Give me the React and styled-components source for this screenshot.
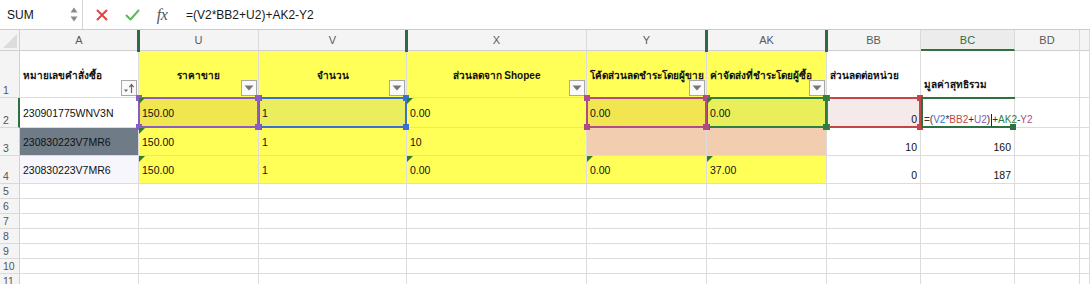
import React from 'react';
import styled, { createGlobalStyle, css } from 'styled-components';

const Global = createGlobalStyle`
  html, body { margin: 0; padding: 0; background: #fff; }
  body {
    font-family: "Liberation Sans", Arial, "Noto Sans", "DejaVu Sans", sans-serif;
    overflow: hidden;
  }
  #root { width: 1090px; height: 284px; }
`;

const YELLOW = '#ffff57';
const PEACH = '#f3cdb0';
const SLATE = '#6f7c88';
const GRID = '#dcdcdc';

const Page = styled.div`
  width: 1090px;
  height: 284px;
  overflow: hidden;
  display: flex;
  flex-direction: column;
  background: #fff;
`;

const FormulaBar = styled.div`
  flex: none;
  height: 29px;
  display: flex;
  align-items: stretch;
  border-bottom: 1px solid #cccccc;
  background: #fff;
`;

const NameBox = styled.div`
  width: 83px;
  box-sizing: border-box;
  display: flex;
  align-items: center;
  justify-content: space-between;
  padding: 0 4px 0 7px;
  border-right: 1px solid #d4d4d4;
  font-size: 12px;
  color: #111;
`;

const Spinner = styled.div`
  display: flex;
  flex-direction: column;
  gap: 3px;
`;

const IconRow = styled.div`
  display: flex;
  align-items: center;
  padding-left: 4px;
`;

const IconBtn = styled.div`
  width: 30px;
  display: flex;
  align-items: center;
  justify-content: center;
`;

const Fx = styled.span`
  font-family: "Liberation Serif", "DejaVu Serif", serif;
  font-style: italic;
  font-size: 16px;
  color: #555;
  letter-spacing: -0.5px;
`;

const FormulaText = styled.div`
  display: flex;
  align-items: center;
  padding-left: 9px;
  font-size: 12px;
  color: #1a1a1a;
`;

const Sheet = styled.div`
  flex: 1;
  display: grid;
  grid-template-columns: 20px 119px 120px 148px 180px 120px 120px 94px 94px 65px 1fr;
  grid-template-rows: 21px 47px 30px 28px 28px repeat(7, 15px);
`;

const Corner = styled.div`
  position: relative;
  background: #f4f4f4;
  border-right: 1px solid #d0d0d0;
  border-bottom: 1px solid #cfcfcf;
  box-sizing: border-box;
  display: flex;
  align-items: flex-end;
  justify-content: flex-end;
  padding: 0 2px 2px 0;
`;

const ColHead = styled.div`
  position: relative;
  box-sizing: border-box;
  background: #f4f4f4;
  border-right: 1px solid #dadada;
  border-bottom: 1px solid #cfcfcf;
  display: flex;
  align-items: center;
  justify-content: center;
  font-size: 11px;
  color: #5a5a5a;
  ${(p) =>
    p.$active &&
    css`
      background: #ececec;
      color: #2c6e3f;
      border-bottom: 2px solid #2e7041;
    `}
  ${(p) =>
    p.$mark &&
    css`
      &::before {
        content: '';
        position: absolute;
        left: -2px;
        top: 0;
        bottom: -2px;
        width: 3px;
        background: #2e6b42;
        z-index: 8;
      }
    `}
`;

const RowHead = styled.div`
  box-sizing: border-box;
  background: #f4f4f4;
  border-right: 1px solid #d0d0d0;
  border-bottom: 1px solid #dadada;
  display: flex;
  align-items: flex-end;
  padding: 0 0 0 3px;
  font-size: 10.5px;
  line-height: 13px;
  color: #555;
  ${(p) =>
    p.$active &&
    css`
      border-right: 2px solid #2e7041;
    `}
`;

const Cell = styled.div`
  position: relative;
  box-sizing: border-box;
  min-width: 0;
  background: ${(p) => p.$bg || '#fff'};
  border-right: 1px solid ${GRID};
  border-bottom: 1px solid ${GRID};
  display: flex;
  align-items: ${(p) => (p.$bottom ? 'flex-end' : 'center')};
  justify-content: ${(p) => (p.$right ? 'flex-end' : 'flex-start')};
  padding: ${(p) => (p.$bottom ? '0 3px 1px 3px' : '0 3px')};
  font-size: 10.5px;
  line-height: 14px;
  color: #111;
  white-space: nowrap;
  ${(p) =>
    p.$tri &&
    css`
      &::before {
        content: '';
        position: absolute;
        top: 0;
        left: 0;
        width: 0;
        height: 0;
        border-top: 6px solid #2f7d2f;
        border-right: 6px solid transparent;
        z-index: 9;
      }
    `}
`;

const HeadCell = styled(Cell)`
  font-weight: bold;
  font-size: 10px;
  justify-content: ${(p) => (p.$center ? 'center' : 'flex-start')};
  align-items: flex-start;
  padding: ${(p) => (p.$low ? '27px 3px 0 3px' : '18px 3px 0 3px')};
`;

const FilterBtn = styled.div`
  position: absolute;
  right: 1px;
  bottom: 1px;
  width: 16px;
  height: 16px;
  box-sizing: border-box;
  border: 1px solid #a9a9a9;
  background: #fafafa;
  display: flex;
  align-items: center;
  justify-content: center;
  z-index: 3;
`;

const Sel = styled.div`
  position: absolute;
  top: -1px;
  left: -1px;
  right: -1px;
  bottom: -1px;
  border: 2px solid ${(p) => p.$c};
  z-index: ${(p) => p.$z};
  pointer-events: none;
`;

const Handle = styled.span`
  position: absolute;
  width: 6px;
  height: 6px;
  background: ${(p) => p.$c};
  ${(p) => (p.$top ? 'top: -4px;' : 'bottom: -4px;')}
  ${(p) => (p.$left ? 'left: -4px;' : 'right: -4px;')}
`;

const EditFrame = styled.div`
  position: absolute;
  top: -1px;
  left: 0;
  right: -1px;
  bottom: -1px;
  border-top: 2px solid #2e7041;
  border-bottom: 2px solid #2e7041;
  border-left: 2px solid #2e7041;
  z-index: 7;
  pointer-events: none;
`;

const EditHandle = styled.span`
  position: absolute;
  right: -1px;
  bottom: -4px;
  width: 6px;
  height: 6px;
  background: #2e7041;
`;

const EditText = styled.span`
  position: relative;
  z-index: 8;
  font-size: 10px;
  line-height: 13px;
  color: #333;
  display: flex;
  align-items: center;
`;

const Ref = styled.span`
  color: ${(p) => p.$c};
`;

const Caret = styled.span`
  display: inline-block;
  width: 0;
  height: 12px;
  border-left: 1px solid #222;
  margin: 0 0.5px;
`;

const C = {
  blue: '#3b6fd1',
  red: '#c44545',
  purple: '#8b5cc4',
  green: '#2f7d40',
  magenta: '#b04b86',
};

function Selection({ c, z }) {
  return (
    <Sel $c={c} $z={z}>
      <Handle $c={c} $top $left />
      <Handle $c={c} $top />
      <Handle $c={c} $left />
      <Handle $c={c} />
    </Sel>
  );
}

function FilterIcon() {
  return (
    <FilterBtn>
      <svg width="10" height="6" viewBox="0 0 10 6">
        <path d="M0.5 0.5 L9.5 0.5 L5 5.5 Z" fill="#777" />
      </svg>
    </FilterBtn>
  );
}

function SortFilterIcon() {
  return (
    <FilterBtn>
      <svg width="12" height="11" viewBox="0 0 12 11">
        <path d="M1 6.5 L5 6.5 L3 9 Z" fill="#666" />
        <path d="M8.5 10 L8.5 2" stroke="#666" strokeWidth="1.2" />
        <path d="M6.3 4.2 L8.5 1.5 L10.7 4.2" stroke="#666" strokeWidth="1.2" fill="none" />
      </svg>
    </FilterBtn>
  );
}

const COLS = [
  { l: 'A' },
  { l: 'U', mark: true },
  { l: 'V' },
  { l: 'X', mark: true },
  { l: 'Y' },
  { l: 'AK', mark: true },
  { l: 'BB', mark: true },
  { l: 'BC', active: true },
  { l: 'BD' },
  { l: '' },
];

const EmptyRow = ({ n }) => (
  <>
    <RowHead>{n}</RowHead>
    {COLS.map((c, i) => (
      <Cell key={i} />
    ))}
  </>
);

export default function App() {
  return (
    <Page>
      <Global />
      <FormulaBar>
        <NameBox>
          <span>SUM</span>
          <Spinner>
            <svg width="8" height="6" viewBox="0 0 8 6">
              <path d="M4 0.5 L7.5 5.5 L0.5 5.5 Z" fill="#8a8a8a" />
            </svg>
            <svg width="8" height="6" viewBox="0 0 8 6">
              <path d="M0.5 0.5 L7.5 0.5 L4 5.5 Z" fill="#8a8a8a" />
            </svg>
          </Spinner>
        </NameBox>
        <IconRow>
          <IconBtn>
            <svg width="12" height="12" viewBox="0 0 12 12">
              <path d="M1.5 1.5 L10.5 10.5 M10.5 1.5 L1.5 10.5" stroke="#e0443e" strokeWidth="2" strokeLinecap="round" />
            </svg>
          </IconBtn>
          <IconBtn>
            <svg width="15" height="12" viewBox="0 0 15 12">
              <path d="M1.5 6.5 L5.5 10.5 L13.5 1.5" stroke="#5cb85c" strokeWidth="2" fill="none" strokeLinecap="round" strokeLinejoin="round" />
            </svg>
          </IconBtn>
          <IconBtn>
            <Fx>fx</Fx>
          </IconBtn>
        </IconRow>
        <FormulaText>=(V2*BB2+U2)+AK2-Y2</FormulaText>
      </FormulaBar>

      <Sheet>
        <Corner>
          <svg width="14" height="14" viewBox="0 0 14 14">
            <path d="M14 0 L14 14 L0 14 Z" fill="#dcdcdc" />
          </svg>
        </Corner>
        {COLS.map((c, i) => (
          <ColHead key={i} $mark={c.mark} $active={c.active}>
            {c.l}
          </ColHead>
        ))}

        <RowHead>1</RowHead>
        <HeadCell>
          หมายเลขคำสั่งซื้อ
          <SortFilterIcon />
        </HeadCell>
        <HeadCell $bg={YELLOW} $center>
          ราคาขาย
          <FilterIcon />
        </HeadCell>
        <HeadCell $bg={YELLOW} $center>
          จำนวน
          <FilterIcon />
        </HeadCell>
        <HeadCell $bg={YELLOW} $center>
          ส่วนลดจาก Shopee
          <FilterIcon />
        </HeadCell>
        <HeadCell $bg={YELLOW} $center>
          โค้ดส่วนลดชำระโดยผู้ขาย
          <FilterIcon />
        </HeadCell>
        <HeadCell $bg={YELLOW}>
          ค่าจัดส่งที่ชำระโดยผู้ซื้อ
          <FilterIcon />
        </HeadCell>
        <HeadCell>ส่วนลดต่อหน่วย</HeadCell>
        <HeadCell $low>มูลค่าสุทธิรวม</HeadCell>
        <HeadCell />
        <HeadCell />

        <RowHead $active>2</RowHead>
        <Cell>230901775WNV3N</Cell>
        <Cell $bg="#efe650" $tri>
          150.00
          <Selection c={C.purple} z={6} />
        </Cell>
        <Cell $bg="#eaee5e">
          1
          <Selection c={C.blue} z={5} />
        </Cell>
        <Cell $bg={YELLOW} $tri>
          0.00
        </Cell>
        <Cell $bg="#f1e651">
          0.00
          <Selection c={C.magenta} z={4} />
        </Cell>
        <Cell $bg="#e9ee5b" $tri>
          0.00
          <Selection c={C.green} z={3} />
        </Cell>
        <Cell $bg="#f6e9e9" $right $bottom>
          0
          <Selection c={C.red} z={2} />
        </Cell>
        <Cell $bottom>
          <EditText>
            =(<Ref $c={C.blue}>V2</Ref>*<Ref $c={C.red}>BB2</Ref>+<Ref $c={C.purple}>U2</Ref>)
            <Caret />+<Ref $c={C.green}>AK2</Ref>-<Ref $c={C.magenta}>Y2</Ref>
          </EditText>
          <EditFrame>
            <EditHandle />
          </EditFrame>
        </Cell>
        <Cell />
        <Cell />

        <RowHead>3</RowHead>
        <Cell $bg={SLATE}>230830223V7MR6</Cell>
        <Cell $bg={YELLOW} $tri>
          150.00
        </Cell>
        <Cell $bg={YELLOW}>1</Cell>
        <Cell $bg={YELLOW}>10</Cell>
        <Cell $bg={PEACH} />
        <Cell $bg={PEACH} />
        <Cell $right $bottom>
          10
        </Cell>
        <Cell $right $bottom>
          160
        </Cell>
        <Cell />
        <Cell />

        <RowHead>4</RowHead>
        <Cell $bg="#f6f6fc">230830223V7MR6</Cell>
        <Cell $bg={YELLOW} $tri>
          150.00
        </Cell>
        <Cell $bg={YELLOW}>1</Cell>
        <Cell $bg={YELLOW} $tri>
          0.00
        </Cell>
        <Cell $bg={YELLOW} $tri>
          0.00
        </Cell>
        <Cell $bg={YELLOW} $tri>
          37.00
        </Cell>
        <Cell $right $bottom>
          0
        </Cell>
        <Cell $right $bottom>
          187
        </Cell>
        <Cell />
        <Cell />

        {[5, 6, 7, 8, 9, 10, 11].map((n) => (
          <EmptyRow key={n} n={n} />
        ))}
      </Sheet>
    </Page>
  );
}
